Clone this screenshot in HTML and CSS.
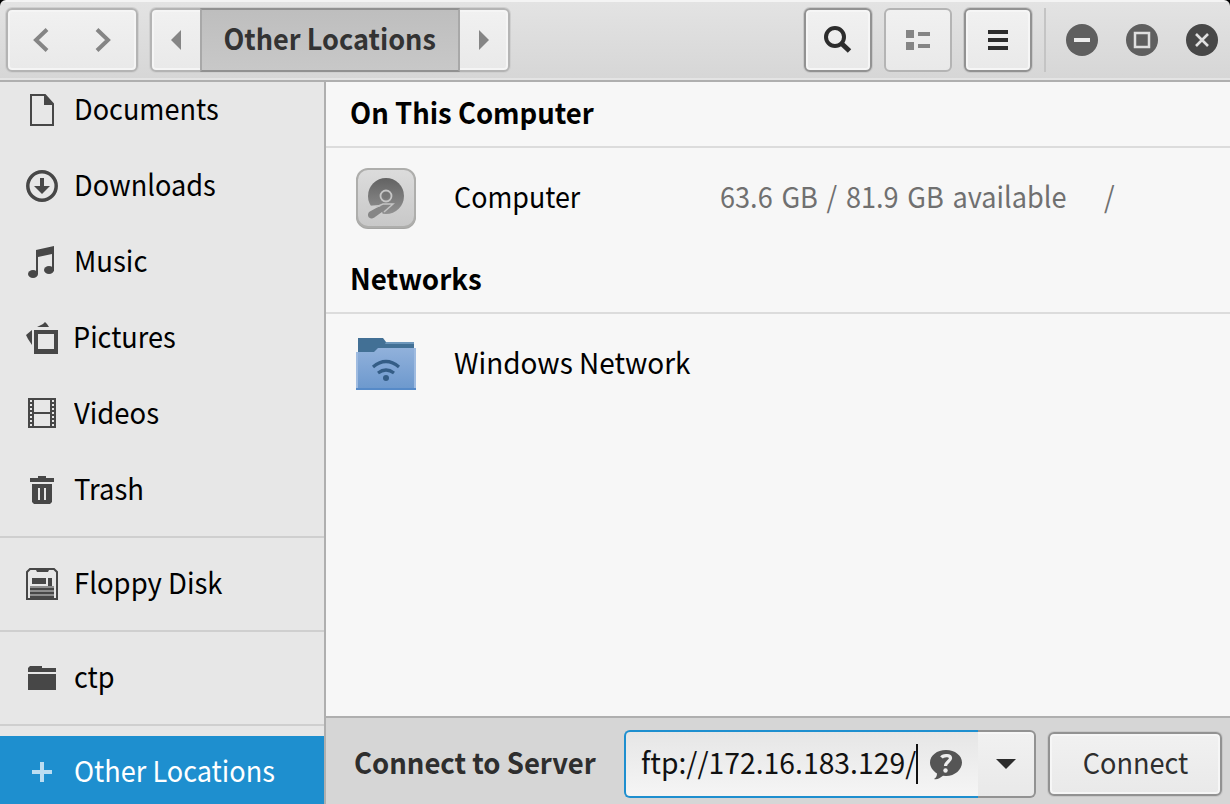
FILE: index.html
```html
<!DOCTYPE html>
<html lang="en">
<head>
<meta charset="utf-8">
<title>Other Locations</title>
<link rel="stylesheet" href="styles.css">
</head>
<body>
<div class="window">
  <header class="headerbar">
    <div class="group nav">
      <svg width="128" height="60" viewBox="0 0 128 60" fill="none" stroke="#858585" stroke-width="4"><path d="M38 19.500L27 30l11 10.500M88 19.500L99 30 88 40.500"/></svg>
    </div>
    <div class="group path">
      <span class="seg"><svg width="10" height="20"><path d="M10 0v20L0 10z" fill="#858585"/></svg></span>
      <span class="seg current"><span class="t t-title">Other Locations</span></span>
      <span class="seg"><svg width="10" height="20"><path d="M0 0v20l10-10z" fill="#858585"/></svg></span>
    </div>
    <div class="tools">
      <span class="btn"><svg width="32" height="32" fill="none" stroke="#2c2c2c" stroke-width="4"><circle cx="13" cy="13" r="9"/><path d="M19 19l8.500 8" stroke-width="5"/></svg></span>
      <span class="btn off"><svg width="32" height="32" fill="#858585"><path d="M4 6h8v8H4zM4 18h8v8H4zM16 8h12v4H16zM16 20h12v4H16z"/></svg></span>
      <span class="btn"><svg width="32" height="32" fill="#2c2c2c"><path d="M6 6h20v4H6zM6 14h20v4H6zM6 22h20v4H6z"/></svg></span>
    </div>
    <div class="controls">
      <svg width="32" height="32"><circle cx="16" cy="16" r="16" fill="#5f5f5f"/><path d="M8 14h16v4H8z" fill="#ececec"/></svg>
      <svg width="32" height="32"><circle cx="16" cy="16" r="16" fill="#5f5f5f"/><path d="M9 9h14v14H9z" fill="none" stroke="#e0e0e0" stroke-width="2.500"/></svg>
      <svg width="32" height="32"><circle cx="16" cy="16" r="16" fill="#474747"/><path d="M10 10l12 12M22 10L10 22" stroke="#e0e0e0" stroke-width="2.600"/></svg>
    </div>
  </header>
  <div class="body">
    <aside class="sidebar">
      <div class="place"><svg width="32" height="32"><path d="M5 1h14l8 9v21H5z" fill="none" stroke="#474747" stroke-width="2"/><path d="M18 1l9 9v1h-9z" fill="#474747"/></svg><span class="t t-doc">Documents</span></div>
      <div class="place"><svg width="32" height="32"><circle cx="16" cy="16" r="14.200" fill="none" stroke="#474747" stroke-width="3.500"/><path d="M14 8h4v8h6l-8 8-8-8h6z" fill="#474747"/></svg><span class="t t-dow">Downloads</span></div>
      <div class="place"><svg width="32" height="32" fill="#474747"><path d="M10 4L28 0v25h-2V8L12 11v17h-2z"/><ellipse cx="7" cy="28" rx="5" ry="4"/><ellipse cx="23" cy="24" rx="5" ry="4"/></svg><span class="t t-mus">Music</span></div>
      <div class="place"><svg width="32" height="32" fill="#474747"><path d="M8 8h24v24H8zM12 12v15h16V12z" fill-rule="evenodd"/><path d="M11 5l6-3 2-2 2 2 2 3zM0 13l6-5v15l-4-6z"/></svg><span class="t t-pic">Pictures</span></div>
      <div class="place"><svg width="32" height="32"><path d="M2 0h28v30H2zM8 2v12h16V2zM8 16v12h16V16z" fill="#474747" fill-rule="evenodd"/><path d="M5 2v27M27 2v27" stroke="#e7e7e7" stroke-width="2" stroke-dasharray="2 2"/></svg><span class="t t-vid">Videos</span></div>
      <div class="place"><svg width="32" height="32" fill="#474747"><path d="M4 4h8V2h8v2h8v4H4z"/><path d="M6 10h20v18l-2 2H8l-2-2zM12 14v12h2V14zM18 14v12h2V14z" fill-rule="evenodd"/></svg><span class="t t-tra">Trash</span></div>
      <hr>
      <div class="place"><svg width="32" height="32"><path d="M4 31H1V4l3-3h24l3 3v27h-3" fill="none" stroke="#474747" stroke-width="2"/><path d="M9 0h15l-2 4H11zM6 10h14v6H6zM22 10h4v8h-4z" fill="#474747"/><path d="M4 18h24v14H4z" fill="#8e8e8e"/><path d="M4 20h24v2H4zM4 24h24v2H4zM4 28h24v4H4z" fill="#474747"/></svg><span class="t t-flo">Floppy Disk</span></div>
      <hr>
      <div class="place"><svg width="32" height="32" fill="#474747"><path d="M2 10V6l2-2h12v2h14v4zM2 12h28v16H2z"/></svg><span class="t t-ctp">ctp</span></div>
      <hr>
      <div class="place selected"><svg width="32" height="32" fill="#bbddf2"><path d="M14 6h4v8h8v4h-8v8h-4v-8H6v-4h8z"/></svg><span class="t t-oth">Other Locations</span></div>
    </aside>
    <main class="main">
      <section class="list">
        <h2><span class="t t-onc">On This Computer</span></h2>
        <div class="row">
          <svg class="disk" width="60" height="62" viewBox="0 0 60 62">
            <defs><linearGradient id="g" x2="0" y2="1"><stop stop-color="#dcdcdc"/><stop offset="1" stop-color="#c8c8c8"/></linearGradient><linearGradient id="d" x2="0" y2="1"><stop stop-color="#626262"/><stop offset="1" stop-color="#919191"/></linearGradient></defs>
            <rect y="2" width="60" height="59" rx="12" fill="#a5a5a3"/><rect x="1" y="1" width="58" height="58" rx="11" fill="url(#g)" stroke="#aeaeac" stroke-width="2"/>
            <circle cx="30" cy="28" r="18" fill="url(#d)"/><path d="M10 38l14-1 3 10H10z" fill="#cecece"/><path d="M13 44l9-5 15-4-11 9-7 5c-5 4-9-1-6-5z" fill="#868686"/><path d="M20 39l7-3h10l-9 8" fill="none" stroke="#c5c5c5" stroke-width="1.500"/><circle cx="30" cy="28" r="5.500" fill="none" stroke="#c6c6c6" stroke-width="1.800"/><circle cx="30" cy="28" r="2.500" fill="#777"/>
          </svg>
          <span class="name"><span class="t t-com">Computer</span></span>
          <span class="space"><span class="t t-spa">63.6 GB / 81.9 GB available</span></span>
          <span class="mount"><span class="t">/</span></span>
        </div>
        <h2><span class="t t-net">Networks</span></h2>
        <div class="row">
          <svg width="60" height="52" viewBox="0 0 60 52">
            <defs><linearGradient id="f" x2="0" y2="1"><stop stop-color="#91b1db"/><stop offset="1" stop-color="#6c98cd"/></linearGradient></defs>
            <path d="M2 0h25l3 4h28v16H2z" fill="#427095"/><path d="M30 4h28v2H29z" fill="#6d97bb"/><path d="M0 14h18l4-4h38v42H0z" fill="url(#f)"/><path d="M1 14v37M59 10v41" stroke="#9fbbe0" stroke-width="2"/><path d="M0 51h60" stroke="#568ac8" stroke-width="2"/>
            <path d="M17 29q13-11 26 0M22 35q8-6 16 0" fill="none" stroke="#345d86" stroke-width="3.200"/><circle cx="30" cy="40" r="3" fill="#345d86"/>
          </svg>
          <span class="name"><span class="t t-win">Windows Network</span></span>
        </div>
      </section>
      <footer class="connect">
        <span class="label"><span class="t t-cts">Connect to Server</span></span>
        <div class="combo">
          <div class="entry"><span class="t t-ftp">ftp://172.16.183.129/</span><i class="caret"></i>
            <svg width="32" height="32"><path d="M16 2c9 0 16 5.500 16 12.500S25 28 16 28l-3-.3C10 30 7 32 4 31c2-1 3-3 3-5.500C3 23 0 19 0 14.500 0 7.500 7 2 16 2z" fill="#555"/><path d="M11.500 9.500c1-1.500 8.500-3.500 9 .5.300 3-5 4-5 8" fill="none" stroke="#eee" stroke-width="3.200"/><circle cx="15.500" cy="22.500" r="2.200" fill="#eee"/></svg>
          </div>
          <div class="drop"><svg width="20" height="10"><path d="M0 0h20L10 10z" fill="#2c2c2c"/></svg></div>
        </div>
        <div class="btn connect-btn"><span class="t t-con">Connect</span></div>
      </footer>
    </main>
  </div>
</div>
</body>
</html>
```
FILE: styles.css
```css
* { box-sizing: border-box; }
body { margin: 0; background: #000; font: 29px/40px "Noto Sans CJK SC", "Noto Sans", sans-serif; color: #000; }
svg { display: block; flex: none; }
.window { width: 1230px; height: 804px; overflow: hidden; display: flex; flex-direction: column; border-radius: 6px 6px 0 0; }

.t { white-space: pre; display: block; padding-bottom: 6px; transform: scaleX(.935); transform-origin: 0 50%; }
.t-title, .t-con { transform-origin: 50% 50%; }
.t-mus, .t-vid, .t-tra, .t-flo, .t-onc, .t-cts { transform: scaleX(.947); }
.t-com { transform: scaleX(.926); }
.t-net { transform: scaleX(.955); }
.t-win { transform: scaleX(.963); }
.t-spa { word-spacing: 2.800px; }
.t-pic { margin-left: -1px; }

.headerbar { height: 82px; flex: none; display: flex; align-items: flex-start; padding: 6px 0 0 6px; background: linear-gradient(#e3e3e3, #d6d6d6); border-top: 2px solid #f4f4f4; border-bottom: 2px solid #afafaf; box-shadow: inset 0 -2px #e4e4e4; }
.group { height: 64px; border: 2px solid #b4b4b4; border-radius: 6px; background: linear-gradient(#f1f1f1, #e9e9e9); box-shadow: inset 0 0 0 2px #f5f5f5, 0 0 0 1px #cfcfcf; display: flex; }
.nav { width: 132px; margin-right: 12px; padding-left: 1px; }
.path { width: 360px; }
.seg { flex: 1; display: flex; align-items: center; justify-content: center; }
.current { flex: 0 0 260px; margin: -2px 0; border: 2px solid #919191; border-left-color: #a8a8a8; border-right-color: #a8a8a8; background: linear-gradient(#bebebe, #c8c8c8); color: #333; font-weight: 700; }
.btn { width: 68px; height: 64px; border: 2px solid #929292; border-radius: 6px; background: linear-gradient(#f1f1f1, #e9e9e9); box-shadow: inset 0 0 0 2px #f6f6f6, 0 0 0 1px #c8c8c8; display: flex; align-items: center; justify-content: center; }
.off { border-color: #b4b4b4; box-shadow: none; }
.tools { display: flex; gap: 12px; margin-left: 294px; }
.controls { display: flex; align-items: center; gap: 28px; height: 64px; margin-left: 12px; padding-left: 20px; border-left: 2px solid #c4c4c4; }

.body { flex: 1; display: flex; min-height: 0; }
.sidebar { width: 326px; flex: none; overflow: hidden; background: #e7e7e7; border-right: 2px solid #afafaf; }
.place { height: 76px; padding-left: 26px; display: flex; align-items: center; gap: 16px; }
.place:first-child { margin-top: -10px; }
.sidebar hr { height: 2px; margin: 8px 0; border: 0; background: #cfcfcf; }
.selected { height: 72px; margin-top: 10px; background: #1e8fcf; color: #fff; }

.main { flex: 1; min-width: 0; display: flex; flex-direction: column; background: #f7f7f7; }
.list { flex: 1; }
h2 { margin: 0; height: 66px; padding-left: 24px; display: flex; align-items: center; border-bottom: 2px solid #dcdcdc; font-size: inherit; font-weight: 700; }
.row { height: 100px; padding-left: 30px; display: flex; align-items: center; }
.disk { margin-top: 2px; }
.name { width: 266px; margin-left: 38px; }
.space { width: 384px; color: #707070; }
.mount { color: #707070; }
.connect { height: 88px; flex: none; display: flex; align-items: center; padding: 6px 8px 0 28px; background: #d6d6d6; border-top: 2px solid #afafaf; color: #2e2e2e; }
.label { width: 270px; font-weight: 700; }
.combo { width: 412px; height: 68px; display: flex; margin-right: 12px; }
.entry { width: 354px; border: 2px solid #1e8fcf; border-right: 0; border-radius: 6px 0 0 6px; background: linear-gradient(#e6e6e6, #f5f5f5); display: flex; align-items: center; padding-left: 15px; color: #111; }
.entry .t { width: 275px; transform: scaleX(.977); }
.caret { width: 2px; height: 40px; background: #111; }
.entry svg { margin-left: 12px; }
.drop { flex: 1; border: 2px solid #929292; border-left: 0; border-radius: 0 6px 6px 0; background: linear-gradient(#f1f1f1, #e9e9e9); box-shadow: inset 0 2px #f6f6f6; display: flex; align-items: center; justify-content: center; }
.connect-btn { width: 174px; }
```
